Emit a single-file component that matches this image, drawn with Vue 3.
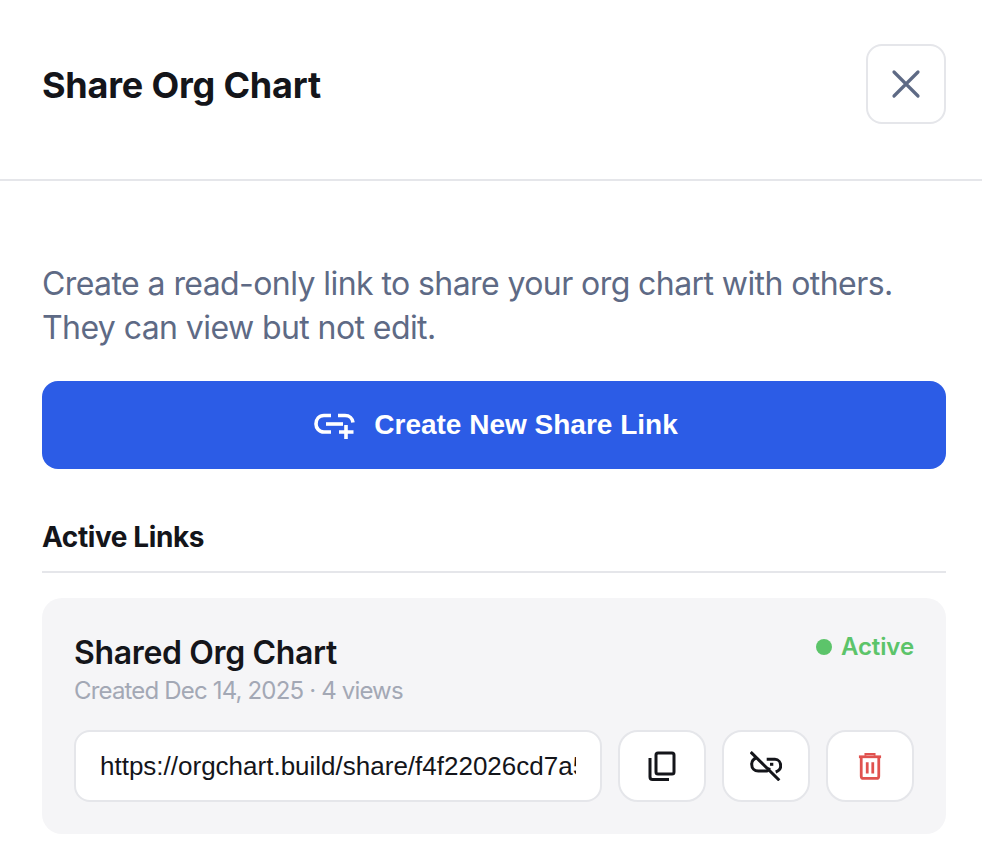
<template>
  <div class="dialog">
    <header class="dialog-header">
      <h2>Share Org Chart</h2>
      <button class="close-btn" aria-label="Close">
        <svg width="32" height="32" viewBox="0 0 32 32" fill="none" stroke="#5e6a85" stroke-width="3.2" stroke-linecap="round">
          <path d="M4 4 L28 28 M28 4 L4 28" />
        </svg>
      </button>
    </header>

    <div class="dialog-body">
      <p class="intro">Create a read-only link to share your org chart with others. They can view but not edit.</p>

      <button class="create-btn">
        <svg width="42" height="30" viewBox="0 0 42 30" fill="none" stroke="#fff" stroke-width="3.6">
          <path d="M17 22 H10 C5 22 2 18 2 14 C2 9 5 5.500 10 5.500 H17" />
          <path d="M24 5.500 H31 C35.500 5.500 38.500 8.500 39 12.500" />
          <path d="M12 14 H29" />
          <path d="M32 15 V29 M25 22 H39.500" />
        </svg>
        <span>Create New Share Link</span>
      </button>

      <h3 class="section-title">Active Links</h3>

      <div v-for="link in links" :key="link.url" class="link-card">
        <div class="card-top">
          <div>
            <div class="link-name">{{ link.name }}</div>
            <div class="link-meta">{{ link.meta }}</div>
          </div>
          <div class="status"><span class="dot"></span>Active</div>
        </div>
        <div class="card-row">
          <input class="url-input" type="text" readonly :value="link.url" />
          <button class="icon-btn" aria-label="Copy">
            <svg width="28" height="30" viewBox="0 0 28 30" fill="none" stroke="#14151a" stroke-width="3">
              <rect x="8" y="2" width="18" height="21" rx="2" />
              <path d="M2 7 V26 C2 27.500 3 28.500 4.500 28.500 H21" />
            </svg>
          </button>
          <button class="icon-btn" aria-label="Disable">
            <svg width="32" height="30" viewBox="0 0 32 30" fill="none" stroke="#14151a" stroke-width="3">
              <path d="M6.700 6.700 C3.500 8 1.700 10.500 1.700 13.300 C1.700 17.500 4.500 20 8.300 20 H16.700 C17.800 20 18.800 18.500 19.300 16.700" />
              <path d="M16.700 8.300 H25 C28.500 8.300 30.700 11.500 30.700 15 C30.700 17.500 28.500 20 25.700 21" />
              <path d="M20 13.300 H23.300" />
              <path d="M0.700 1 L29.300 29.300" />
            </svg>
          </button>
          <button class="icon-btn" aria-label="Delete">
            <svg width="24" height="28" viewBox="0 0 26 30" fill="none" stroke="#e0524f" stroke-width="3">
              <path d="M1 5 H25" />
              <path d="M8 4 V2 H18 V4" stroke-width="2" />
              <path d="M3.500 6 V26 C3.500 27.500 4.500 28.500 6 28.500 H20 C21.500 28.500 22.500 27.500 22.500 26 V6" />
              <path d="M10 11 V23 M16 11 V23" />
            </svg>
          </button>
        </div>
      </div>
    </div>
  </div>
</template>

<script setup>
const links = [
  {
    name: 'Shared Org Chart',
    meta: 'Created Dec 14, 2025 · 4 views',
    url: 'https://orgchart.build/share/f4f22026cd7a5b91e3'
  }
]
</script>

<style scoped>
.dialog {
  width: 982px;
  height: 842px;
  overflow: hidden;
  background: #fff;
  font-family: Inter, "Liberation Sans", sans-serif;
}

.dialog-header {
  display: flex;
  align-items: center;
  justify-content: space-between;
  box-sizing: border-box;
  height: 181px;
  padding: 0 36px 11px 42px;
  border-bottom: 2px solid #e5e6ea;
}

.dialog-header h2 {
  margin: 0;
  padding-top: 2px;
  font-size: 36px;
  font-weight: 700;
  letter-spacing: -0.2px;
  color: #14151a;
}

.close-btn {
  display: flex;
  align-items: center;
  justify-content: center;
  width: 80px;
  height: 80px;
  padding: 0;
  background: #fff;
  border: 2px solid #e5e6ea;
  border-radius: 16px;
}

.dialog-body {
  padding: 81px 36px 0 42px;
}

.intro {
  margin: 0;
  font-size: 32px;
  line-height: 44px;
  letter-spacing: -0.58px;
  color: #5e6a85;
}

.create-btn {
  display: flex;
  align-items: center;
  justify-content: center;
  gap: 18px;
  width: 100%;
  height: 88px;
  margin-top: 31px;
  padding: 0 0 0 4px;
  background: #2c5ce6;
  border: none;
  border-radius: 16px;
  color: #fff;
  font-family: "Liberation Sans", Arial, sans-serif;
  font-size: 28px;
  font-weight: 700;
}

.section-title {
  margin: 50px 0 0;
  padding-bottom: 16px;
  border-bottom: 2px solid #e5e6ea;
  font-size: 28px;
  line-height: 36px;
  font-weight: 700;
  letter-spacing: -0.4px;
  color: #14151a;
}

.link-card {
  box-sizing: border-box;
  height: 236px;
  margin-top: 25px;
  padding: 33px 32px 32px;
  background: #f5f5f7;
  border-radius: 20px;
}

.card-top {
  display: flex;
  justify-content: space-between;
  align-items: flex-start;
}

.link-name {
  font-size: 32px;
  line-height: 44px;
  font-weight: 600;
  letter-spacing: -0.35px;
  color: #14151a;
}

.link-meta {
  font-size: 24px;
  line-height: 32px;
  letter-spacing: -0.83px;
  color: #a3a8b5;
}

.status {
  display: flex;
  align-items: center;
  gap: 9px;
  margin-top: -1px;
  font-size: 24px;
  letter-spacing: -0.1px;
  line-height: 34px;
  font-weight: 600;
  color: #5cc46a;
}

.dot {
  width: 16px;
  height: 16px;
  border-radius: 50%;
  background: #5cc46a;
}

.card-row {
  display: flex;
  gap: 16px;
  margin-top: 23px;
}

.url-input {
  flex: 1;
  min-width: 0;
  box-sizing: border-box;
  height: 72px;
  padding: 0 24px;
  background: #fff;
  border: 2px solid #e5e6ea;
  border-radius: 16px;
  outline: none;
  font-family: "Liberation Sans", Arial, sans-serif;
  font-size: 26px;
  color: #14151a;
}

.icon-btn {
  display: flex;
  align-items: center;
  justify-content: center;
  flex: none;
  width: 88px;
  height: 72px;
  padding: 0;
  background: #fff;
  border: 2px solid #e5e6ea;
  border-radius: 20px;
}
</style>
